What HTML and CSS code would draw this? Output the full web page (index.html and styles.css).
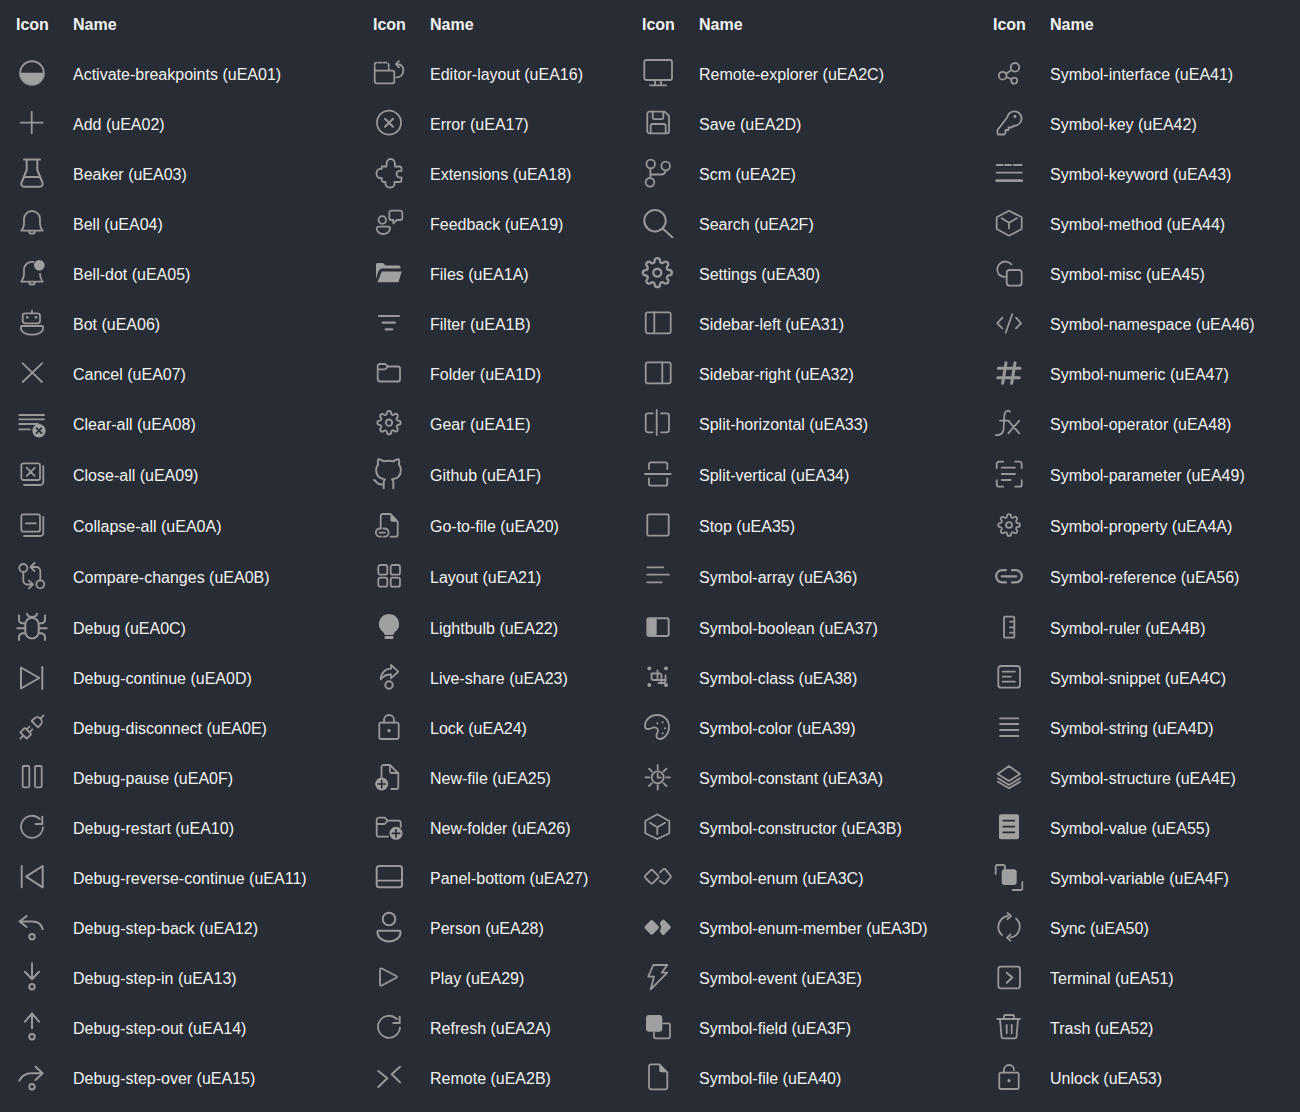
FILE: index.html
```html
<!DOCTYPE html>
<html lang="en">
<head>
<meta charset="utf-8">
<title>Icons</title>
<link rel="stylesheet" href="styles.css">
</head>
<body>
<svg class="defs" aria-hidden="true"><defs><path id="gear" d="M12 15a3 3 0 1 0 0-6 3 3 0 0 0 0 6z M19.4 15a1.65 1.65 0 0 0 .33 1.82l.06.06a2 2 0 0 1 0 2.83 2 2 0 0 1-2.83 0l-.06-.06a1.65 1.65 0 0 0-1.82-.33 1.65 1.65 0 0 0-1 1.51V21a2 2 0 0 1-2 2 2 2 0 0 1-2-2v-.09A1.65 1.65 0 0 0 9 19.4a1.65 1.65 0 0 0-1.82.33l-.06.06a2 2 0 0 1-2.83 0 2 2 0 0 1 0-2.83l.06-.06a1.65 1.65 0 0 0 .33-1.82 1.65 1.65 0 0 0-1.51-1H3a2 2 0 0 1-2-2 2 2 0 0 1 2-2h.09A1.65 1.65 0 0 0 4.6 9a1.65 1.65 0 0 0-.33-1.82l-.06-.06a2 2 0 0 1 0-2.83 2 2 0 0 1 2.83 0l.06.06a1.65 1.65 0 0 0 1.82.33H9a1.65 1.65 0 0 0 1-1.51V3a2 2 0 0 1 2-2 2 2 0 0 1 2 2v.09a1.65 1.65 0 0 0 1 1.51 1.65 1.65 0 0 0 1.82-.33l.06-.06a2 2 0 0 1 2.83 0 2 2 0 0 1 0 2.83l-.06.06a1.65 1.65 0 0 0-.33 1.82V9a1.65 1.65 0 0 0 1.51 1H21a2 2 0 0 1 2 2 2 2 0 0 1-2 2h-.09a1.65 1.65 0 0 0-1.51 1z"/></defs></svg>
<table class="table">
<colgroup><col class="c-i"><col class="c-n1"><col class="c-i"><col class="c-n2"><col class="c-i"><col class="c-n3"><col class="c-i"><col class="c-n4"></colgroup>
<thead><tr><th>Icon</th><th>Name</th><th>Icon</th><th>Name</th><th>Icon</th><th>Name</th><th>Icon</th><th>Name</th></tr></thead>
<tbody>
<tr>
<td><svg class="i" viewBox="0 0 32 32"><path class="f" d="M3.7 14.700h24.600a12.300 12.300 0 0 1-24.600 0z"/><circle cx="16" cy="15" r="11.800" stroke-width="2"/></svg></td><td>Activate-breakpoints (uEA01)</td>
<td><svg class="i" viewBox="0 0 32 32"><path d="M1.700 12.700v10.600a2 2 0 0 0 2 2h15.600a2 2 0 0 0 2-2v-8.600a2 2 0 0 0-2-2z"/><path stroke-dasharray="3 2" d="M1.700 12V6.700a2 2 0 0 1 2-2h10a2 2 0 0 1 2 2V12"/><path d="M26 3l-3 3.200 3 3.200M23.500 6.200h1.500a5.500 5.500 0 0 1 5.300 6.500 6.500 6.500 0 0 1-7 6.600"/></svg></td><td>Editor-layout (uEA16)</td>
<td><svg class="i" viewBox="0 0 32 32"><rect x="2.300" y="2" width="27.700" height="20" rx="2"/><path d="M13 22.500v4.500M19 22.500v4.500M8 27.300h16"/></svg></td><td>Remote-explorer (uEA2C)</td>
<td><svg class="i" viewBox="0 0 32 32"><circle cx="22" cy="9.300" r="4.300"/><circle cx="9.700" cy="17.700" r="3.900"/><circle cx="21.300" cy="22.700" r="3"/><path d="M18.500 12l-5.600 3.700M13.400 19l5 2.300"/></svg></td><td>Symbol-interface (uEA41)</td>
</tr>
<tr>
<td><svg class="i" viewBox="0 0 32 32"><path d="M4.700 14.700h22M15.700 4v21.300"/></svg></td><td>Add (uEA02)</td>
<td><svg class="i" viewBox="0 0 32 32"><circle cx="16" cy="14.700" r="12"/><path d="M12 10.700l8 8M20 10.700l-8 8" stroke-width="2"/></svg></td><td>Error (uEA17)</td>
<td><svg class="i" viewBox="0 0 32 32"><path d="M7.300 3.700h15.400L27 8v15.300a2 2 0 0 1-2 2H7.300a2 2 0 0 1-2-2V5.700a2 2 0 0 1 2-2z"/><path d="M10.700 3.700v6a1.500 1.500 0 0 0 1.500 1.500h7.600a1.500 1.500 0 0 0 1.500-1.500v-6M8.700 25.300V18a2 2 0 0 1 2-2h11a2 2 0 0 1 2 2v7.300"/></svg></td><td>Save (uEA2D)</td>
<td><svg class="i" viewBox="0 0 32 32"><path d="M14.200 9.500a7.200 7.200 0 1 1 6.400 8.200L18.500 19.500H15.500V22H12.500V25L11 26.500H5.500a1 1 0 0 1-1-1V22z"/><circle class="f" cx="22" cy="8.500" r="1.400"/></svg></td><td>Symbol-key (uEA42)</td>
</tr>
<tr>
<td><svg class="i" viewBox="0 0 32 32"><path stroke-width="2" d="M8 1.500h16M10.700 1.500V12L5.600 24.500a3 3 0 0 0 2.800 4.300h15.200a3 3 0 0 0 2.800-4.300L21.300 12V1.500M8.500 19h15"/></svg></td><td>Beaker (uEA03)</td>
<td><svg class="i" viewBox="0 0 32 32"><path d="M8.700 8.500H13.500C13 3 15 1 17.700 1S22.500 3 22 8.500H26.500a2 2 0 0 1 2 2V13C26 12.500 23.500 13 23.500 16S26 20 28.500 19.500V22a2 2 0 0 1-2 2H21.500C22 28 20 29.500 17 29.500S12 28 12.500 24H10.700a2 2 0 0 1-2-2V20C5 20.500 3.500 18.500 3.500 15.500S5 10.500 8.700 11z"/></svg></td><td>Extensions (uEA18)</td>
<td><svg class="i" viewBox="0 0 32 32"><circle cx="8.700" cy="6" r="4.300"/><circle cx="23.700" cy="8" r="4.300"/><circle cx="8" cy="24.300" r="4.300"/><path d="M8.400 10.300v9.700M23.700 12.300a5 5 0 0 1-5 4.200H8.400"/></svg></td><td>Scm (uEA2E)</td>
<td><svg class="i" viewBox="0 0 32 32"><path d="M3.700 7h6M12 7h6M20.500 7h8.200"/><path d="M3.700 14.700h25"/><path stroke-width="2.800" d="M3.700 22.700h25"/></svg></td><td>Symbol-keyword (uEA43)</td>
</tr>
<tr>
<td><svg class="i" viewBox="0 0 32 32"><path d="M16 3a8 8 0 0 0-8 8v5c0 2.500-1 4.500-2.700 6.700h21.400C25 20.500 24 18.500 24 16v-5a8 8 0 0 0-8-8zM13 22.700a3 3 0 0 0 6 0"/></svg></td><td>Bell (uEA04)</td>
<td><svg class="i" viewBox="0 0 32 32"><circle cx="9.300" cy="12" r="3.800"/><path d="M5.700 18.700h9.600a1.700 1.700 0 0 1 1.700 1.700c0 3-3 5.600-6.700 5.600s-6.600-2.600-6.600-5.600a1.700 1.700 0 0 1 2-1.700zM18.300 2.700h9a2 2 0 0 1 2 2v5.300a2 2 0 0 1-2 2h-3.600l-3.400 3.300V12h-2a2 2 0 0 1-2-2V4.700a2 2 0 0 1 2-2z"/></svg></td><td>Feedback (uEA19)</td>
<td><svg class="i" viewBox="0 0 32 32"><circle cx="13" cy="12.700" r="10.700" stroke-width="2"/><path stroke-width="2" d="M20.700 20.500l9.600 8.800"/></svg></td><td>Search (uEA2F)</td>
<td><svg class="i" viewBox="0 0 32 32"><path d="M16 2.700l12.700 6.600v11.700L16 27.700 3.700 21V9.300zM8.700 10.300l7.300 4.400 7.700-4.400M16 14.700v5.600"/></svg></td><td>Symbol-method (uEA44)</td>
</tr>
<tr>
<td><svg class="i" viewBox="0 0 32 32"><path d="M17.500 4a8 8 0 0 0-9.500 7.500V16c0 2.800-1 5-2.700 7.700h21.400C25 21.500 24 19 24 16M13 23.700a3 3 0 0 0 6 0"/><circle class="f" cx="23.300" cy="7.300" r="5.300"/></svg></td><td>Bell-dot (uEA05)</td>
<td><svg class="i" viewBox="0 0 32 32"><path class="f" d="M3 6.500A1.500 1.500 0 0 1 4.500 5H10l2.500 2.500H26A1.500 1.500 0 0 1 27.500 9v1.500H8L5.500 13 3 21z"/><path class="f" d="M8.700 13.500H28.700L25.500 24.300H4.500z"/></svg></td><td>Files (uEA1A)</td>
<td><svg class="i" viewBox="0 0 32 32"><use href="#gear" transform="translate(-.54 -1.14) scale(1.32)"/></svg></td><td>Settings (uEA30)</td>
<td><svg class="i" viewBox="0 0 32 32"><path d="M18.500 6.500A8 8 0 1 0 6 16.500 8 8 0 0 0 13.500 18.500"/><rect x="13.700" y="12" width="15" height="15.700" rx="3"/></svg></td><td>Symbol-misc (uEA45)</td>
</tr>
<tr>
<td><svg class="i" viewBox="0 0 32 32"><rect x="6.700" y="5.300" width="17.300" height="10" rx="2.500"/><path d="M16 2.700v2.600M5.500 18h21a1 1 0 0 1 .5 1v1.500c0 3.500-5 6.200-11 6.200S5 24 5 20.500V19a1 1 0 0 1 .5-1z"/><circle class="f" cx="11.300" cy="9.300" r="1.300"/><circle class="f" cx="20" cy="9.300" r="1.300"/></svg></td><td>Bot (uEA06)</td>
<td><svg class="i" viewBox="0 0 32 32"><path stroke-width="2.200" d="M6 8h20M9.700 14.700h12.300M12.700 21.300h6.600"/></svg></td><td>Filter (uEA1B)</td>
<td><svg class="i" viewBox="0 0 32 32"><rect x="3.700" y="4.300" width="25" height="21" rx="2"/><path d="M12.300 4.300v21"/></svg></td><td>Sidebar-left (uEA31)</td>
<td><svg class="i" viewBox="0 0 32 32"><path d="M9.300 9.700l-5 5.600 5 5M23 9.700l5 5.600-5 5M19.300 6l-6.600 18.700"/></svg></td><td>Symbol-namespace (uEA46)</td>
</tr>
<tr>
<td><svg class="i" viewBox="0 0 32 32"><path d="M6.700 5.300L26 24M26 5.300L6.700 24"/></svg></td><td>Cancel (uEA07)</td>
<td><svg class="i" viewBox="0 0 32 32"><path d="M4.700 8a2 2 0 0 1 2-2h5.500l3 2.500H25a2 2 0 0 1 2 2v11a2 2 0 0 1-2 2H6.700a2 2 0 0 1-2-2zM4.700 11.300h7.300l3-2.800"/></svg></td><td>Folder (uEA1D)</td>
<td><svg class="i" viewBox="0 0 32 32"><rect x="3.700" y="4.300" width="25" height="21" rx="2"/><path d="M20.300 4.300v21"/></svg></td><td>Sidebar-right (uEA32)</td>
<td><svg class="i" viewBox="0 0 32 32"><path stroke-width="3" d="M13 4.700L9.700 25.300M22 4.700l-3.300 20.600M5.300 10.300H27M4.700 19.700h21.600"/></svg></td><td>Symbol-numeric (uEA47)</td>
</tr>
<tr>
<td><svg class="i" viewBox="0 0 32 32"><path d="M3.300 7h24.700M3.300 11.300h24.700M3.300 16h19M3.300 21.300h10.700"/><circle class="f" cx="23" cy="22.700" r="6.700"/><path class="c" stroke-width="1.700" d="M20.500 20.200l5 5M25.500 20.200l-5 5"/></svg></td><td>Clear-all (uEA08)</td>
<td><svg class="i" viewBox="0 0 32 32"><use href="#gear" transform="translate(3.280 1.980) scale(1.060)"/></svg></td><td>Gear (uEA1E)</td>
<td><svg class="i" viewBox="0 0 32 32"><path d="M14.700 2v25M10.700 5.300H6a2.300 2.300 0 0 0-2.300 2.300v14.400A2.300 2.300 0 0 0 6 24.300h4.700M19 5.300h5.700A2.300 2.300 0 0 1 27 7.600v14.400a2.300 2.300 0 0 1-2.300 2.300H19"/></svg></td><td>Split-horizontal (uEA33)</td>
<td><svg class="i" viewBox="0 0 32 32"><path d="M17 3.700c-1.300-1.700-4.300-1.400-5.300 1.800-1 3.300-.4 12-1.400 16.800-.7 3.500-3.700 5-7.300 4.700"/><path d="M7 12.700h8.300M15.300 12.700l11 12.600M26.300 12.700l-11 12.600"/></svg></td><td>Symbol-operator (uEA48)</td>
</tr>
<tr class="tall">
<td><svg class="i" viewBox="0 0 32 32"><rect x="5.300" y="4.300" width="18.700" height="16.700" rx="2"/><path d="M27.300 7v16a3 3 0 0 1-3 3H8M10.700 8.800l8 8M18.700 8.800l-8 8"/></svg></td><td>Close-all (uEA09)</td>
<td><svg class="i" viewBox="0 0 32 32"><path stroke-width="2" transform="translate(-1.760 -1.080) scale(1.380)" d="M9 19c-5 1.500-5-2.500-7-3m14 6v-3.870a3.370 3.370 0 0 0-.94-2.610c3.140-.35 6.440-1.540 6.440-7A5.440 5.440 0 0 0 20 4.770 5.070 5.070 0 0 0 19.910 1S18.730.65 16 2.480a13.380 13.380 0 0 0-7 0C6.270.65 5.090 1 5.090 1A5.070 5.070 0 0 0 5 4.770a5.440 5.440 0 0 0-1.500 3.780c0 5.420 3.300 6.610 6.440 7A3.370 3.370 0 0 0 9 18.130V22"/></svg></td><td>Github (uEA1F)</td>
<td><svg class="i" viewBox="0 0 32 32"><path d="M3 15h25.700M7 10V5.300a2 2 0 0 1 2-2h14.300a2 2 0 0 1 2 2V10M7 19.300v5.400a2 2 0 0 0 2 2h14.300a2 2 0 0 0 2-2v-5.400"/></svg></td><td>Split-vertical (uEA34)</td>
<td><svg class="i" viewBox="0 0 32 32"><path d="M3.700 9.200V4.700a2 2 0 0 1 2-2h4.500M22.200 2.700h4.500a2 2 0 0 1 2 2v4.500M28.700 21.200v4.500a2 2 0 0 1-2 2h-4.500M10.200 27.700H5.700a2 2 0 0 1-2-2v-4.500M8.700 8.700H22M8.700 15H22M8.700 21h9"/></svg></td><td>Symbol-parameter (uEA49)</td>
</tr>
<tr class="tall">
<td><svg class="i" viewBox="0 0 32 32"><rect x="5.300" y="4.300" width="18.700" height="17.400" rx="2"/><path d="M27.300 7v16a3 3 0 0 1-3 3H8M10 13.300h10"/></svg></td><td>Collapse-all (uEA0A)</td>
<td><svg class="i" viewBox="0 0 32 32"><path d="M7.700 18V6a2 2 0 0 1 2-2h8L24.700 11.500V24.700a2 2 0 0 1-2 2H17.500"/><path class="f" d="M17.500 4.300v6a1.500 1.500 0 0 0 1.500 1.500h5.500z"/><path d="M8 18.500H7a4.100 4.100 0 0 0 0 8.200h1M10.500 18.500h1a4.100 4.100 0 0 1 0 8.200h-1M6.500 22.600h5.500"/></svg></td><td>Go-to-file (uEA20)</td>
<td><svg class="i" viewBox="0 0 32 32"><rect x="5.300" y="4.300" width="21.400" height="21.400" rx="1.500"/></svg></td><td>Stop (uEA35)</td>
<td><svg class="i" viewBox="0 0 32 32"><use href="#gear" transform="translate(4.120 3.120) scale(.990)"/></svg></td><td>Symbol-property (uEA4A)</td>
</tr>
<tr class="tall">
<td><svg class="i" viewBox="0 0 32 32"><circle cx="7.300" cy="7" r="4"/><circle cx="24.300" cy="23.300" r="4"/><path d="M7.300 11v8.500a4 4 0 0 0 4 4h5.500M13 19.700l4 3.800-4 3.800M24.300 19.300V10a4 4 0 0 0-4-4h-5.800M18.500 2l-4 4 4 4"/></svg></td><td>Compare-changes (uEA0B)</td>
<td><svg class="i" viewBox="0 0 32 32"><rect x="5.300" y="4" width="9" height="9.700" rx="2"/><rect x="17.700" y="4" width="9.300" height="9.700" rx="2"/><rect x="5.300" y="16.700" width="9" height="9" rx="2"/><rect x="17.700" y="16.700" width="9.300" height="9" rx="2"/></svg></td><td>Layout (uEA21)</td>
<td><svg class="i" viewBox="0 0 32 32"><path d="M5.300 6.300h16M5.300 13.700H27M5.300 21.300h14.400"/></svg></td><td>Symbol-array (uEA36)</td>
<td><svg class="i" viewBox="0 0 32 32"><path stroke-width="2.200" d="M13 9.200H9.200a6.100 6.100 0 0 0 0 12.200H13M19 9.200h3.800a6.100 6.100 0 0 1 0 12.200H19M8.700 15.300h14.600"/></svg></td><td>Symbol-reference (uEA56)</td>
</tr>
<tr class="tall">
<td><svg class="i" viewBox="0 0 32 32"><path stroke-width="2" d="M9.300 12.500a6.700 6.700 0 0 1 13.400 0v7.200a6.700 6.700 0 0 1-13.400 0zM1.300 16.300h8M22.700 16.300h8M3 3.500v4.500c0 2 2 3.500 6.300 3.500M29 3.500v4.500c0 2-2 3.500-6.300 3.500M3 28v-3c0-2 2-4 6.300-4M29 28v-3c0-2-2-4-6.300-4M11 1.700c.5 2.300 2 3.300 5 3.300s4.500-1 5-3.300"/></svg></td><td>Debug (uEA0C)</td>
<td><svg class="i" viewBox="0 0 32 32"><path class="f" d="M16 2a10 10 0 0 1 6 18c-1 1-1.500 2-1.700 3h-8.600c-.2-1-.7-2-1.700-3A10 10 0 0 1 16 2z"/><rect class="f" x="11.500" y="24" width="9" height="3" rx="1.200"/></svg></td><td>Lightbulb (uEA22)</td>
<td><svg class="i" viewBox="0 0 32 32"><rect class="f" x="5.300" y="6.300" width="9.400" height="17.700" rx="2"/><rect x="5.300" y="6.300" width="21.400" height="17.700" rx="2" stroke-width="2"/></svg></td><td>Symbol-boolean (uEA37)</td>
<td><svg class="i" viewBox="0 0 32 32"><rect x="11" y="4.700" width="10.300" height="21" rx="1"/><path d="M17 9.700h4.300M17 15.300h4.300M17 20.700h4.300"/></svg></td><td>Symbol-ruler (uEA4B)</td>
</tr>
<tr>
<td><svg class="i" viewBox="0 0 32 32"><path stroke-width="2" d="M5 5.500V26.500L23.300 16zM26.300 5v22"/></svg></td><td>Debug-continue (uEA0D)</td>
<td><svg class="i" viewBox="0 0 32 32"><path d="M18 3l7.300 6.700L18 16.300v-3.800c-5 0-8 1.500-10.300 5C7.700 11 12 7 18 6.700z"/><circle cx="16" cy="23" r="3.700" stroke-width="2"/></svg></td><td>Live-share (uEA23)</td>
<td><svg class="i" viewBox="0 0 32 32"><circle class="f" cx="7.300" cy="6.300" r="1.900"/><circle class="f" cx="24" cy="6.300" r="1.900"/><circle class="f" cx="7.300" cy="23" r="1.900"/><circle class="f" cx="24" cy="23" r="1.900"/><path d="M9.500 11.500h8a2 2 0 0 1 2 2v8M9.500 11.500v4.500a2 2 0 0 0 2 2h12M15.500 8.500v9M23.500 13.500v5.500a2 2 0 0 1-2 2h-5"/></svg></td><td>Symbol-class (uEA38)</td>
<td><svg class="i" viewBox="0 0 32 32"><rect x="5.300" y="4" width="21.700" height="21.700" rx="3"/><path d="M9.700 9.700H22M9.700 14.700h8M9.700 19.700H22"/></svg></td><td>Symbol-snippet (uEA4C)</td>
</tr>
<tr>
<td><svg class="i" viewBox="0 0 32 32"><g transform="rotate(-45 16 15)"><path d="M-.5 15H4M4 10.500h5.500a1 1 0 0 1 1 1v7a1 1 0 0 1-1 1H4z"/><path d="M10.500 13h4M10.500 17h4M20 10.500h3.500a4.500 4.500 0 0 1 0 9H20zM28 15h4.500"/></g></svg></td><td>Debug-disconnect (uEA0E)</td>
<td><svg class="i" viewBox="0 0 32 32"><rect x="6.300" y="10.700" width="19.400" height="16.300" rx="1.500"/><path d="M11 10.700V8a5 5 0 0 1 10 0v2.700"/><circle class="f" cx="16" cy="18.700" r="1.600"/></svg></td><td>Lock (uEA24)</td>
<td><svg class="i" viewBox="0 0 32 32"><path d="M15.300 3C8 3 3 8 3 14c0 2 1.200 3.200 3 3.200 2 0 3.500-1.200 5.500-1.700 2-.4 4.500.5 4.500 3 0 2-1.500 3-1.500 5 0 2 1 3.500 3.500 3.500 4 0 9-5 9-11.500C27.500 8.500 22 3 15.300 3z"/><circle class="f" cx="15.300" cy="11.300" r="1"/><circle class="f" cx="20.700" cy="10.300" r="1"/><circle class="f" cx="23" cy="16.300" r="1"/><circle class="f" cx="20.700" cy="21.300" r="1"/></svg></td><td>Symbol-color (uEA39)</td>
<td><svg class="i" viewBox="0 0 32 32"><path d="M7 6.300h18.300M7 12h18.300M7 18h18.300M7 24h18.300"/></svg></td><td>Symbol-string (uEA4D)</td>
</tr>
<tr>
<td><svg class="i" viewBox="0 0 32 32"><rect x="6.700" y="4" width="6.600" height="21.300" rx="1.200"/><rect x="19" y="4" width="6.700" height="21.300" rx="1.200"/></svg></td><td>Debug-pause (uEA0F)</td>
<td><svg class="i" viewBox="0 0 32 32"><path d="M8.500 15V5a2 2 0 0 1 2-2H17l8.300 8.300V25a2 2 0 0 1-2 2h-5"/><path d="M17 3v6.500a1.500 1.500 0 0 0 1.500 1.500h6.800"/><circle class="f" cx="8.700" cy="22" r="6.500"/><path class="c" stroke-width="1.700" d="M8.700 18.300v7.400M5 22h7.400"/></svg></td><td>New-file (uEA25)</td>
<td><svg class="i" viewBox="0 0 32 32"><path d="M15.700 7.700V3M15.700 27.500v-4.500M7.500 15.300H3.500M28 15.300h-4M9.900 9.500L7 6.600M24.400 24L21.500 21.100M9.900 21.100L7 24M24.400 6.600l-2.900 2.900"/><circle cx="15.700" cy="15.300" r="6"/><path d="M15.700 11.700v4h3"/></svg></td><td>Symbol-constant (uEA3A)</td>
<td><svg class="i" viewBox="0 0 32 32"><path d="M16 4l11 8-11 7-11.300-7zM5 16.300L16 23l11-6.700M5 19.700L16 26.300l11-6.600"/></svg></td><td>Symbol-structure (uEA4E)</td>
</tr>
<tr>
<td><svg class="i" viewBox="0 0 32 32"><path d="M23.800 7A11 11 0 1 0 27 15.300"/><path stroke-width="2" d="M26.300 4.700V12h-6.600"/></svg></td><td>Debug-restart (uEA10)</td>
<td><svg class="i" viewBox="0 0 32 32"><path d="M15 24.700H5.700a2 2 0 0 1-2-2V7.700a2 2 0 0 1 2-2h6l3 3h11a2 2 0 0 1 2 2V15M3.700 12h8l3-3.300"/><circle class="f" cx="23" cy="21.300" r="6.500"/><path class="c" stroke-width="1.700" d="M23 17.600V25M19.300 21.300h7.400"/></svg></td><td>New-folder (uEA26)</td>
<td><svg class="i" viewBox="0 0 32 32"><path d="M15.300 2.300l12 6.700v12.300l-12 5.700-12-5.700V9zM8 10.700l7.300 4.600 7.700-4.600M15.300 15.300V22"/></svg></td><td>Symbol-constructor (uEA3B)</td>
<td><svg class="i" viewBox="0 0 32 32"><rect class="f" x="6" y="2.300" width="20" height="25" rx="2"/><path class="c" stroke-width="1.800" d="M10.300 8.700h11M10.300 14.700h11M10.300 20.300h11"/></svg></td><td>Symbol-value (uEA55)</td>
</tr>
<tr>
<td><svg class="i" viewBox="0 0 32 32"><path stroke-width="2" d="M5.700 4v21.300M26.700 4v21.300L10 14.700z"/></svg></td><td>Debug-reverse-continue (uEA11)</td>
<td><svg class="i" viewBox="0 0 32 32"><rect x="3.700" y="4" width="25.300" height="21.300" rx="2.500" stroke-width="2"/><path d="M3.700 18.700H29"/></svg></td><td>Panel-bottom (uEA27)</td>
<td><svg class="i" viewBox="0 0 32 32"><rect x="4.400" y="9.400" width="10.600" height="10.600" rx="1.500" transform="rotate(45 9.700 14.700)"/><path d="M18 10.300l3.200-2.900a1.500 1.500 0 0 1 2.200 0l5 6.100a1.500 1.500 0 0 1 0 2.200l-5 5.600a1.500 1.500 0 0 1-2.200 0L18 19"/></svg></td><td>Symbol-enum (uEA3C)</td>
<td><svg class="i" viewBox="0 0 32 32"><path d="M12 8V4.500A1.500 1.500 0 0 0 10.500 3H4.500A1.800 1.800 0 0 0 2.700 4.800V12M19.700 28h8a1.500 1.500 0 0 0 1.600-1.500V20"/><rect class="f" x="8.700" y="7.300" width="15" height="15.700" rx="3"/></svg></td><td>Symbol-variable (uEA4F)</td>
</tr>
<tr>
<td><svg class="i" viewBox="0 0 32 32"><path stroke-width="2" d="M10.700 4L3.500 9.500l7.200 5.500M3.500 9.500H16c5.500 0 9.700 2.800 10.700 7.800"/><circle cx="16" cy="24.700" r="2.700" stroke-width="2"/></svg></td><td>Debug-step-back (uEA12)</td>
<td><svg class="i" viewBox="0 0 32 32"><circle cx="16" cy="7" r="6.300" stroke-width="2"/><path stroke-width="2" d="M5.500 18.700h21a1 1 0 0 1 1 1v1c0 5-5.500 8.700-11.500 8.700s-11.500-3.700-11.500-8.700v-1a1 1 0 0 1 1-1z"/></svg></td><td>Person (uEA28)</td>
<td><svg class="i" viewBox="0 0 32 32"><rect class="f" x="4" y="9.700" width="11.400" height="11.400" rx="2" transform="rotate(45 9.700 15.400)"/><path class="f" d="M17.700 11L20.200 8a1.500 1.500 0 0 1 2.200 0l6 6.300a1.500 1.500 0 0 1 0 2l-6 6.300a1.500 1.500 0 0 1-2.200 0l-2.500-3 1.600-4.300z"/></svg></td><td>Symbol-enum-member (uEA3D)</td>
<td><svg class="i" viewBox="0 0 32 32"><path d="M14.700 4A11 11 0 0 0 9 23M17.300 25.600A11 11 0 0 0 23 6.500M14.500 1l3.500 3-3.500 3.200M17.500 22.500l-3.500 3.200 3.500 3.200"/></svg></td><td>Sync (uEA50)</td>
</tr>
<tr>
<td><svg class="i" viewBox="0 0 32 32"><path stroke-width="2" d="M16 1.300v16M9 9.700l7 7.600 7-7.600"/><circle cx="16" cy="24.700" r="2.700" stroke-width="2"/></svg></td><td>Debug-step-in (uEA13)</td>
<td><svg class="i" viewBox="0 0 32 32"><path d="M7 7.500a1.200 1.200 0 0 1 1.800-1l14.500 7.500a1 1 0 0 1 0 1.700L8.800 23.500a1.200 1.200 0 0 1-1.800-1z"/></svg></td><td>Play (uEA29)</td>
<td><svg class="i" viewBox="0 0 32 32"><path d="M11.300 3h14L19.700 10.700h5.600L8.700 27.300 12 14.700H6.300z"/></svg></td><td>Symbol-event (uEA3E)</td>
<td><svg class="i" viewBox="0 0 32 32"><rect x="5.300" y="4.700" width="21.700" height="21.600" rx="2.500"/><path stroke-width="2" d="M13.700 10.700l5.600 4.800-5.600 5.200"/></svg></td><td>Terminal (uEA51)</td>
</tr>
<tr>
<td><svg class="i" viewBox="0 0 32 32"><path stroke-width="2" d="M16 1.300v15M9 9.700l7-8.400 7 8.400"/><circle cx="16" cy="24.700" r="2.700" stroke-width="2"/></svg></td><td>Debug-step-out (uEA14)</td>
<td><svg class="i" viewBox="0 0 32 32"><path d="M23.800 7A11 11 0 1 0 27 15.300"/><path stroke-width="2" d="M26.600 4.700l.1 6.400h-6.400"/></svg></td><td>Refresh (uEA2A)</td>
<td><svg class="i" viewBox="0 0 32 32"><rect class="f" x="4" y="3" width="16.300" height="16.700" rx="3"/><path d="M21.300 11.300h5a1.700 1.700 0 0 1 1.700 1.700v11.600a1.700 1.700 0 0 1-1.700 1.700H13.700a1.700 1.700 0 0 1-1.700-1.700v-3.900"/></svg></td><td>Symbol-field (uEA3F)</td>
<td><svg class="i" viewBox="0 0 32 32"><path d="M4.300 7H27M11 7V4.500a1.500 1.500 0 0 1 1.500-1.500h7a1.500 1.500 0 0 1 1.500 1.500V7M7 7l1.500 17.800a1.700 1.700 0 0 0 1.700 1.500h11.600a1.700 1.700 0 0 0 1.700-1.500L25 7M13.700 13v8.300M18.700 13v8.300"/></svg></td><td>Trash (uEA52)</td>
</tr>
<tr>
<td><svg class="i" viewBox="0 0 32 32"><path stroke-width="2" d="M3.300 18.700C6 13.500 10 11.300 15 11.300h11.700M19.500 4.700l7.200 6.600-7.200 6.700"/><circle cx="16" cy="24.700" r="2.700" stroke-width="2"/></svg></td><td>Debug-step-over (uEA15)</td>
<td><svg class="i" viewBox="0 0 32 32"><path stroke-width="2" d="M5.300 9l9 7.300-9 8.700M27 4.700l-8.300 7.600 8.300 8"/></svg></td><td>Remote (uEA2B)</td>
<td><svg class="i" viewBox="0 0 32 32"><path d="M9 2.300h8.300l8 8V25.300a2 2 0 0 1-2 2H9a2 2 0 0 1-2-2V4.300a2 2 0 0 1 2-2z"/><path class="f" d="M17.300 2.300v6.200a1.800 1.800 0 0 0 1.800 1.800h6.200z"/></svg></td><td>Symbol-file (uEA40)</td>
<td><svg class="i" viewBox="0 0 32 32"><rect x="6.300" y="10.700" width="19.400" height="16.300" rx="1.500"/><path d="M11 10.700V8a5 5 0 0 1 10 0"/><circle class="f" cx="16" cy="18.700" r="1.600"/></svg></td><td>Unlock (uEA53)</td>
</tr>
</tbody>
</table>
</body>
</html>
```
FILE: styles.css
```css
html, body {
  margin: 0;
  background: #282c34;
}
body {
  min-height: 1112px;
  color: #f2f2f2;
  font: 16px "Liberation Sans", Arial, sans-serif;
}
.defs {
  position: absolute;
  width: 0;
  height: 0;
}
.table {
  width: 1300px;
  table-layout: fixed;
  border-collapse: collapse;
}
.c-i { width: 57px; }
.c-n1 { width: 300px; }
.c-n2 { width: 212px; }
.c-n3 { width: 294px; }
.c-n4 { width: 266px; }
th {
  height: 49px;
  padding: 0 0 0 16px;
  text-align: left;
  font-weight: 700;
  white-space: nowrap;
}
td {
  box-sizing: border-box;
  height: 50px;
  padding: 0 0 0 16px;
  white-space: nowrap;
}
td:nth-child(even) {
  padding-top: 2px;
}
.tall td {
  height: 51px;
}
.i {
  display: block;
  width: 32px;
  height: 32px;
  overflow: visible;
  fill: none;
  stroke: #989898;
  stroke-width: 1.8;
  stroke-linecap: round;
  stroke-linejoin: round;
}
.i * {
  vector-effect: non-scaling-stroke;
}
.i .f {
  fill: #a0a0a0;
  stroke: none;
}
.i .c {
  stroke: #282c34;
}
```
